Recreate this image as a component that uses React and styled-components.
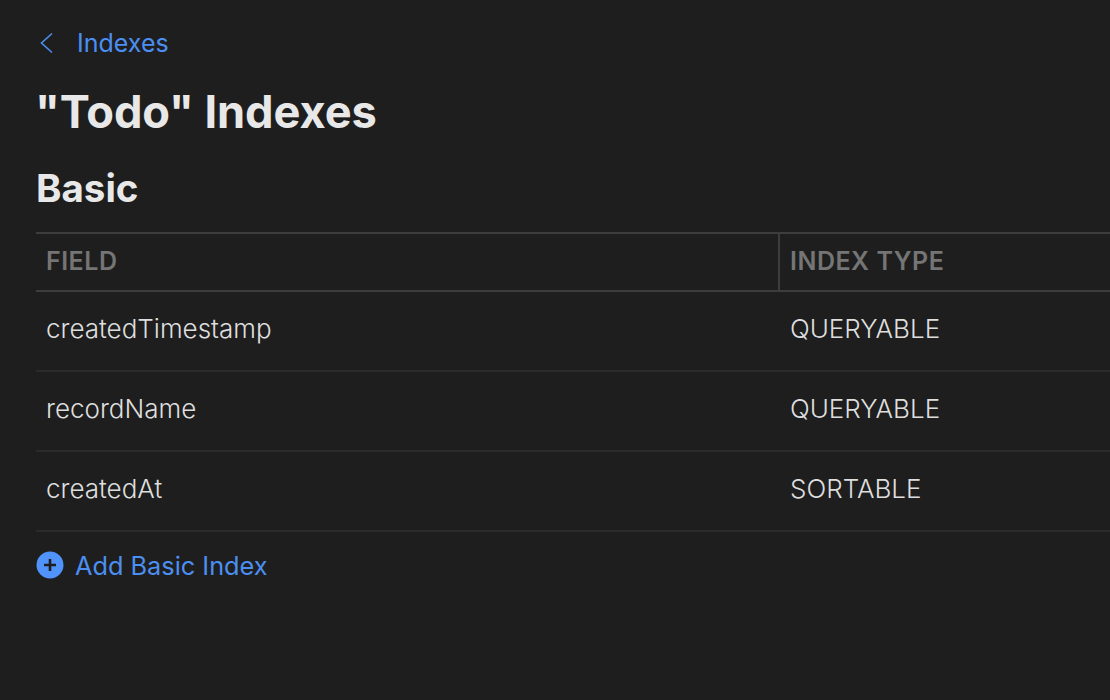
import React from "react";
import styled, { createGlobalStyle } from "styled-components";

const Global = createGlobalStyle`
  html, body { margin: 0; padding: 0; background: #1e1e1e; }
  body { width: 1110px; height: 700px; overflow: hidden; font-family: Inter, "Liberation Sans", sans-serif; }
`;
const Page = styled.div`
  box-sizing: border-box; width: 1110px; height: 700px; padding: 29px 0 0 36px; background: #1e1e1e; color: #e8e8e8;
`;
const Back = styled.a`
  display: flex; align-items: center; gap: 23px; height: 28px; padding-left: 3px; color: #4c8ff2; font-size: 25px;
`;
const Title = styled.h1`
  margin: 30px 0 0 -1px; font-size: 45.2px; line-height: 50px; font-weight: 700; color: #e8e8e8; letter-spacing: -0.1px;
`;
const Section = styled.h2`
  margin: 31px 0 0; font-size: 38.5px; line-height: 40px; font-weight: 700; color: #e8e8e8;
`;
const Table = styled.div`
  margin-top: 24px; display: grid; grid-template-columns: 744px 1fr; font-size: 26px;
`;
const Head = styled.div`
  height: 60px; display: flex; align-items: center; padding: 0 0 2px 10px; box-sizing: border-box;
  border-top: 2px solid #3d3d3d; border-bottom: 2px solid #3d3d3d;
  border-right: ${p => p.$divider ? "2px solid #3d3d3d" : "none"};
  color: #757575; font-size: 25px; font-weight: 600; letter-spacing: 0.5px;
`;
const Cell = styled.div`
  height: 80px; display: flex; align-items: center; padding: 0 0 6px 10px; box-sizing: border-box;
  border-bottom: 2px solid #2b2b2b; color: #dedede; font-weight: 300;
`;
const Add = styled.a`
  display: flex; align-items: center; gap: 11px; margin-top: 19px; color: #4c8ff2; font-size: 25.3px; height: 28px;
`;

const rows = [["createdTimestamp","QUERYABLE"],["recordName","QUERYABLE"],["createdAt","SORTABLE"]];
export default function App() {
  return (
    <Page>
      <Global />
      <Back>
        <svg width="15" height="22" viewBox="0 0 15 22" fill="none" stroke="#4c8ff2" strokeWidth="1.6"><path d="M13 1.5 2.5 11 13 20.5" /></svg>
        Indexes
      </Back>
      <Title>"Todo" Indexes</Title>
      <Section>Basic</Section>
      <Table>
        <Head $divider>FIELD</Head>
        <Head>INDEX TYPE</Head>
        {rows.map(([a,b]) => <React.Fragment key={a}><Cell>{a}</Cell><Cell>{b}</Cell></React.Fragment>)}
      </Table>
      <Add>
        <svg width="28" height="28" viewBox="0 0 28 28"><circle cx="14" cy="14" r="13.5" fill="#4f93fb"/><path d="M14 8v12M8 14h12" stroke="#1e1e1e" strokeWidth="2.6"/></svg>
        Add Basic Index
      </Add>
    </Page>
  );
}
